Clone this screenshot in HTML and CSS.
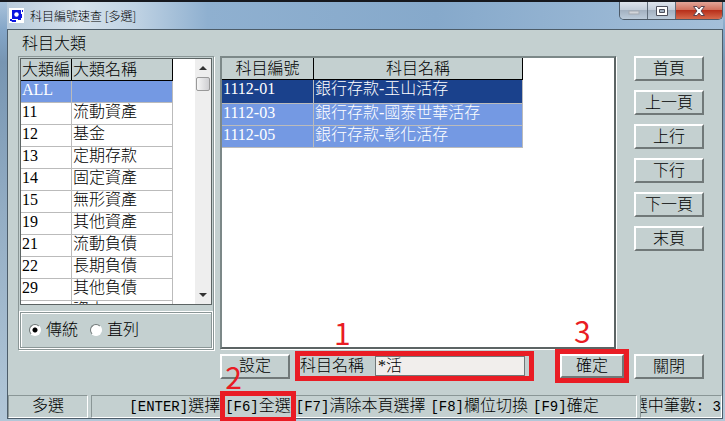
FILE: index.html
```html
<!DOCTYPE html>
<html lang="zh-Hant">
<head>
  <meta charset="UTF-8" />
  <meta name="viewport" content="width=device-width, initial-scale=1.0"/>
  <title>科目編號速查 [多選]</title>
  <link rel="stylesheet" href="styles.css">
</head>
<body>
  <div class="window">
    <header class="titlebar">
      <svg class="app-icon" width="15" height="15" viewBox="0 0 15 15">
        <rect width="15" height="15" fill="#fff"/>
        <path d="M3 2h9v9H3z" fill="#0a14e0"/>
        <path d="M1 11h2v2H1zM2 12h5v2H3zM13 2h1v2h-1zM12 6h1v4h-1zM9 11h3v1H9z" fill="#0a14e0"/>
        <circle cx="7.500" cy="6.500" r="2.200" fill="#fff"/>
      </svg>
      <h1>科目編號速查 [多選]</h1>
      <div class="controls">
        <button class="min" aria-label="最小化">
          <svg width="12" height="6" viewBox="0 0 12 6"><rect x="1" y="1" width="10" height="3" fill="#d2d5da" stroke="#a4a9b2"/></svg>
        </button>
        <button class="max" aria-label="最大化">
          <svg width="12" height="10" viewBox="0 0 12 10"><path d="M.5 .5h11v9H.5zM3.500 3.500h5v3h-5z" fill="#fff" fill-rule="evenodd" stroke="#4c4f5c"/></svg>
        </button>
        <button class="close" aria-label="關閉視窗">
          <svg width="12" height="10" viewBox="0 0 12 10"><path d="M.5 .5h3.500l2 2.500 2-2.500h3.500L8 5l3.500 4.500H8L6 7 4 9.500H.5L4 5z" fill="#fff" stroke="#5a4450"/></svg>
        </button>
      </div>
    </header>

    <main class="client">
      <h2>科目大類</h2>

      <div class="content">
        <section class="category">
          <div class="list">
            <table class="grid">
              <colgroup><col class="col-no"><col class="col-name"></colgroup>
              <thead>
                <tr><th>大類編</th><th>大類名稱</th></tr>
              </thead>
              <tbody>
                <tr class="selected"><td>ALL</td><td></td></tr>
                <tr><td>11</td><td>流動資產</td></tr>
                <tr><td>12</td><td>基金</td></tr>
                <tr><td>13</td><td>定期存款</td></tr>
                <tr><td>14</td><td>固定資產</td></tr>
                <tr><td>15</td><td>無形資產</td></tr>
                <tr><td>19</td><td>其他資產</td></tr>
                <tr><td>21</td><td>流動負債</td></tr>
                <tr><td>22</td><td>長期負債</td></tr>
                <tr><td>29</td><td>其他負債</td></tr>
                <tr><td></td><td>資本</td></tr>
              </tbody>
            </table>
            <div class="scrollbar">
              <i class="arrow up"></i>
              <i class="thumb"></i>
              <i class="arrow down"></i>
            </div>
          </div>
          <div class="modes">
            <label><input type="radio" name="mode" checked> 傳統</label>
            <label><input type="radio" name="mode"> 直列</label>
          </div>
        </section>

        <section class="subjects">
          <div class="result">
            <table class="grid">
              <colgroup><col class="col-code"><col class="col-subject"></colgroup>
              <thead>
                <tr><th>科目編號</th><th>科目名稱</th></tr>
              </thead>
              <tbody>
                <tr class="selected current"><td>1112-01</td><td>銀行存款-玉山活存</td></tr>
                <tr class="selected"><td>1112-03</td><td>銀行存款-國泰世華活存</td></tr>
                <tr class="selected"><td>1112-05</td><td>銀行存款-彰化活存</td></tr>
              </tbody>
            </table>
          </div>
          <div class="actions">
            <button class="btn">設定</button>
            <div class="search mark">
              <span class="step">1</span>
              <label for="keyword">科目名稱</label>
              <input type="text" id="keyword" value="*活">
            </div>
            <div class="mark confirm">
              <span class="step">3</span>
              <button class="btn">確定</button>
            </div>
          </div>
        </section>

        <nav class="side">
          <button class="btn">首頁</button>
          <button class="btn">上一頁</button>
          <button class="btn">上行</button>
          <button class="btn">下行</button>
          <button class="btn">下一頁</button>
          <button class="btn">末頁</button>
          <button class="btn last">關閉</button>
        </nav>
      </div>

      <footer class="status">
        <div class="cell mode">多選</div>
        <div class="cell keys">
          <span><kbd>[ENTER]</kbd>選擇</span>
          <span class="mark"><b class="step">2</b><kbd>[F6]</kbd>全選</span>
          <span><kbd>[F7]</kbd>清除本頁選擇</span>
          <span><kbd>[F8]</kbd>欄位切換</span>
          <span><kbd>[F9]</kbd>確定</span>
        </div>
        <div class="cell count"><span>選中筆數<samp>: 3</samp></span></div>
      </footer>
    </main>
  </div>
</body>
</html>
```

FILE: styles.css
```css
* {
  box-sizing: border-box;
}

body {
  margin: 0;
  font-family: "Liberation Serif", "Noto Sans CJK TC", serif;
  font-size: 16px;
  font-weight: 300;
  line-height: 20px;
  color: #000;
}

h1, h2 {
  margin: 0;
  font-weight: inherit;
}

button, input {
  font: inherit;
  color: inherit;
}

kbd, samp {
  font-family: "Liberation Mono", monospace;
  font-size: 14px;
}

.window {
  display: flex;
  flex-direction: column;
  height: 100vh;
  padding: 0 2px 2px 7px;
  overflow: hidden;
  border-top: 2px solid #16181e;
  background: linear-gradient(#a9c2da, #84a6c8 28px, #7795b2 60px, #93adc4 50%, #b2c7d8);
}

/* title bar */
.titlebar {
  display: flex;
  align-items: center;
  height: 27px;
  flex: none;
  padding-left: 2px;
  background: linear-gradient(to right, #b9cbdc, #d5e1eb 10%, #bfd2e3 18%, #8fb0d0 28%, #86a9cb 60%, #a4bfd9);
}

.titlebar h1 {
  margin-left: 6px;
  font-family: "Noto Sans CJK TC", sans-serif;
  font-size: 12px;
}

.controls {
  display: flex;
  align-self: flex-start;
  margin-left: auto;
  border: 1px solid #4d5a68;
  border-top: 0;
  border-radius: 0 0 5px 5px;
  overflow: hidden;
}

.controls button {
  display: flex;
  align-items: center;
  justify-content: center;
  width: 28px;
  height: 17px;
  padding: 0;
  border: 0;
  border-right: 1px solid #5f6c7a;
  background: linear-gradient(#dde4ec, #c0cbd8 50%, #a3b1c1 50%, #bccbda);
}

.controls .min {
  padding-top: 4px;
}

.controls .close {
  width: 46px;
  border-right: 0;
  background: linear-gradient(#e2a598, #cf6c58 50%, #b8301b 50%, #d66a4c);
}

/* client area */
.client {
  display: flex;
  flex-direction: column;
  flex: 1;
  min-height: 0;
  border: 1px solid #4d5d6a;
  background: #c4d0d0;
}

.client h2 {
  padding: 4px 14px 0;
  font-size: 16px;
}

.content {
  display: grid;
  grid-template-columns: 196px 1fr 70px;
  flex: 1;
  min-height: 0;
  padding: 2px 18px 0 10px;
}

.category {
  display: flex;
  flex-direction: column;
  min-height: 0;
  margin-bottom: 45px;
  padding: 1px;
  border: 1px solid #8a9696;
  box-shadow: 1px 1px 0 #fff;
}

.list, .result {
  display: flex;
  flex: 1;
  min-height: 0;
  overflow: hidden;
  border: 1px solid #5c6464;
  background: #fff;
}

.scrollbar {
  display: flex;
  flex-direction: column;
  align-items: center;
  width: 16px;
  margin-left: auto;
  background: #eee;
}

.arrow {
  margin: 7px 0;
  border: 4px solid transparent;
}

.arrow.up {
  border-top: 0;
  border-bottom-color: #333;
}

.arrow.down {
  margin-top: auto;
  border-bottom: 0;
  border-top-color: #333;
}

.thumb {
  width: 14px;
  height: 14px;
  border: 1px solid #999;
  border-radius: 2px;
  background: linear-gradient(to right, #f6f6f6, #cfcfd2);
}

.modes {
  display: flex;
  align-items: center;
  gap: 12px;
  height: 36px;
  flex: none;
  margin-top: 7px;
  padding-left: 8px;
  border: 1px solid #8a9696;
  box-shadow: inset 1px 1px 0 #fff, 0 0 0 1px #fff;
}

.modes label {
  display: flex;
  align-items: center;
  gap: 5px;
}

.modes input {
  appearance: none;
  width: 12px;
  height: 12px;
  margin: 0;
  border: 1px solid;
  border-color: #707878 #fff #fff #707878;
  border-radius: 50%;
  background: #fff;
}

.modes input:checked {
  background: radial-gradient(circle, #000 2px, #fff 3px);
}

/* tables */
.grid {
  table-layout: fixed;
  align-self: flex-start;
  border-collapse: separate;
  border-spacing: 0;
}

.col-no { width: 50px; }
.col-name { width: 101px; }
.col-code { width: 92px; }
.col-subject { width: 209px; }

.grid th, .grid td {
  height: 22px;
  padding: 0 1px;
  overflow: hidden;
  font-weight: 300;
  line-height: 20px;
  white-space: nowrap;
}

.grid th {
  border-right: 1px solid #000;
  border-bottom: 1px solid #000;
  background: #c4d0d0;
}

.category th {
  text-align: left;
}

.grid td {
  border-right: 1px solid #bbb;
  border-bottom: 1px solid #bbb;
  line-height: 18px;
  vertical-align: top;
}

.grid .selected {
  color: #fff;
  background: #7499e3;
}

.grid .current {
  background: #1a418c;
}

.grid .current td {
  height: 24px;
}

/* right side */
.subjects {
  display: flex;
  flex-direction: column;
  min-width: 0;
  min-height: 0;
  margin: 0 18px 12px 6px;
}

.result {
  border-width: 2px;
  border-color: #7c8888 #5c6464 #5c6464 #7c8888;
  box-shadow: 1px 1px 0 #fff;
}

.actions {
  display: flex;
  align-items: center;
  flex: none;
  height: 34px;
}

.btn {
  width: 70px;
  height: 25px;
  flex: none;
  padding: 0;
  border: 2px solid;
  border-color: #fff #707878 #707878 #fff;
  background: #c4d0d0;
  line-height: 20px;
}

.search {
  display: flex;
  align-items: center;
  flex: 1;
  min-width: 0;
  height: 20px;
  margin: 0 31px 0 10px;
  padding-right: 4px;
}

.search label {
  width: 75px;
  flex: none;
}

.search input {
  flex: 1;
  min-width: 0;
  height: 20px;
  padding: 0 2px;
  border: 1px solid #707878;
  background: #f1eeec;
}

.confirm {
  margin-right: -8px;
}

.confirm .btn {
  display: block;
  width: 64px;
  height: 24px;
}

.side {
  display: flex;
  flex-direction: column;
  gap: 9px;
  margin-bottom: 16px;
}

.side .last {
  margin-top: auto;
}

/* numbered steps */
.mark {
  position: relative;
  outline: 5px solid #e91c24;
}

.step {
  position: absolute;
  bottom: 100%;
  left: 14px;
  margin-bottom: 4px;
  color: #e91c24;
  font-family: "Noto Sans CJK TC", sans-serif;
  font-size: 30px;
  font-weight: 400;
  line-height: 40px;
}

.search .step {
  left: 34px;
}

/* status bar */
.status {
  display: flex;
  gap: 3px;
  flex: none;
  height: 23px;
}

.cell {
  border: 1px solid;
  border-color: #8a9696 #fff #fff #8a9696;
  white-space: nowrap;
}

.mode {
  width: 80px;
  text-align: center;
}

.keys {
  display: flex;
  justify-content: center;
  gap: 5px;
  flex: 1;
}

.keys .step {
  left: 0;
  margin-bottom: 0;
}

.count {
  display: flex;
  justify-content: flex-end;
  width: 82px;
  overflow: hidden;
}
```
